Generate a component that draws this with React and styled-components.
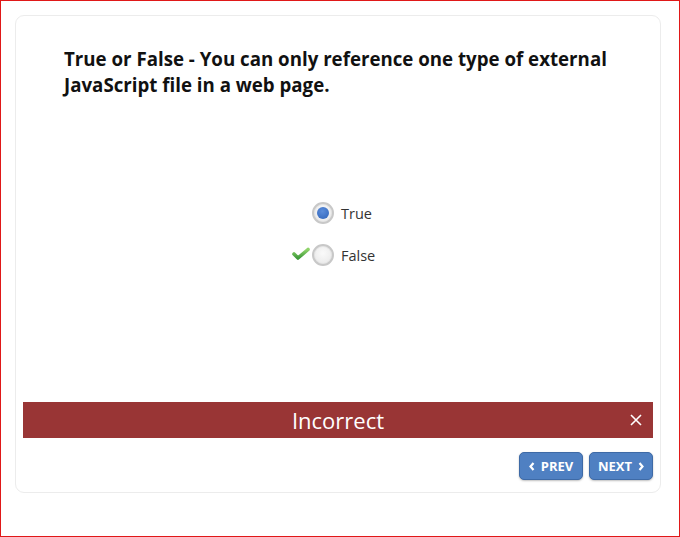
import React from "react";
import styled, { createGlobalStyle } from "styled-components";

const Global = createGlobalStyle`
  html, body { margin: 0; padding: 0; background: #fff; }
  body { font-family: "Open Sans", "Noto Sans", sans-serif; }
  * { box-sizing: border-box; }
`;

const Frame = styled.div`
  width: 680px;
  height: 537px;
  border: 1px solid #e01818;
  padding: 14px 0 0 14px;
`;

const Card = styled.div`
  width: 646px;
  height: 478px;
  border: 1px solid #ececec;
  border-radius: 9px;
  display: flex;
  flex-direction: column;
  padding: 30px 7px 12px 7px;
`;

const Question = styled.h1`
  margin: 0;
  padding: 0 20px 0 41px;
  font-size: 18.7px;
  line-height: 26px;
  font-weight: 700;
  color: #111;
`;

const Options = styled.div`
  margin-top: 104px;
  display: flex;
  flex-direction: column;
  align-items: flex-start;
  gap: 20px;
  padding-left: 289px;
`;

const Option = styled.label`
  position: relative;
  display: flex;
  align-items: center;
  gap: 7px;
  font-size: 14.5px;
  color: #333;
  height: 22px;
`;

const Radio = styled.span`
  width: 22px;
  height: 22px;
  border-radius: 50%;
  background: radial-gradient(circle at 50% 40%, #fafafa 0%, #ececec 70%);
  border: 2px solid #c8c8c8;
  box-shadow: inset 0 0 0 1px #e4e4e4;
  display: flex;
  align-items: center;
  justify-content: center;
`;

const Dot = styled.span`
  width: 12px;
  height: 12px;
  border-radius: 50%;
  background: radial-gradient(circle at 45% 35%, #5b8ddb 0%, #2f63b8 100%);
`;

const Check = styled.svg`
  position: absolute;
  left: -20px;
  top: 3px;
`;

const Feedback = styled.div`
  margin-top: auto;
  height: 36px;
  background: #993535;
  color: #fff;
  display: flex;
  align-items: center;
  justify-content: center;
  position: relative;
  font-size: 22px;
  font-weight: 400;
`;

const Close = styled.span`
  position: absolute;
  right: 10px;
  top: 11px;
  display: flex;
`;

const Nav = styled.div`
  display: flex;
  justify-content: flex-end;
  gap: 6px;
  margin-top: 14px;
`;

const NavButton = styled.button`
  width: 64px;
  height: 28px;
  border-radius: 5px;
  border: 1px solid #3e6aa6;
  background: #4f80c2;
  box-shadow: 0 1px 2px rgba(0, 0, 0, 0.25);
  color: #fff;
  font-family: "Open Sans", sans-serif;
  font-weight: 700;
  font-size: 13px;
  display: flex;
  align-items: center;
  justify-content: center;
  gap: 6px;
  padding: 0;
`;

const Chevron = ({ dir }) => (
  <svg width="6" height="9" viewBox="0 0 6 9">
    <path
      d={dir === "left" ? "M4.5 1 L1.5 4.5 L4.5 8" : "M1.5 1 L4.5 4.5 L1.5 8"}
      fill="none"
      stroke="#fff"
      strokeWidth="2.2"
    />
  </svg>
);

export default function App() {
  return (
    <>
      <Global />
      <Frame>
        <Card>
          <Question>
            True or False - You can only reference one type of external
            JavaScript file in a web page.
          </Question>
          <Options>
            <Option>
              <Radio>
                <Dot />
              </Radio>
              True
            </Option>
            <Option>
              <Check width="18" height="14" viewBox="0 0 18 14">
                <defs>
                  <linearGradient id="chk" x1="0" y1="0" x2="0" y2="1">
                    <stop offset="0" stopColor="#8fd36a" />
                    <stop offset="1" stopColor="#3f9a3a" />
                  </linearGradient>
                </defs>
                <path
                  d="M2 7 L6 11 L16 2.5"
                  fill="none"
                  stroke="url(#chk)"
                  strokeWidth="3.6"
                  strokeLinejoin="round"
                  strokeLinecap="round"
                />
              </Check>
              <Radio />
              False
            </Option>
          </Options>
          <Feedback>
            Incorrect
            <Close>
              <svg width="14" height="14" viewBox="0 0 14 14">
                <path d="M2 2 L12 12 M12 2 L2 12" stroke="#fff" strokeWidth="1.6" />
              </svg>
            </Close>
          </Feedback>
          <Nav>
            <NavButton>
              <Chevron dir="left" />
              PREV
            </NavButton>
            <NavButton>
              NEXT
              <Chevron dir="right" />
            </NavButton>
          </Nav>
        </Card>
      </Frame>
    </>
  );
}
